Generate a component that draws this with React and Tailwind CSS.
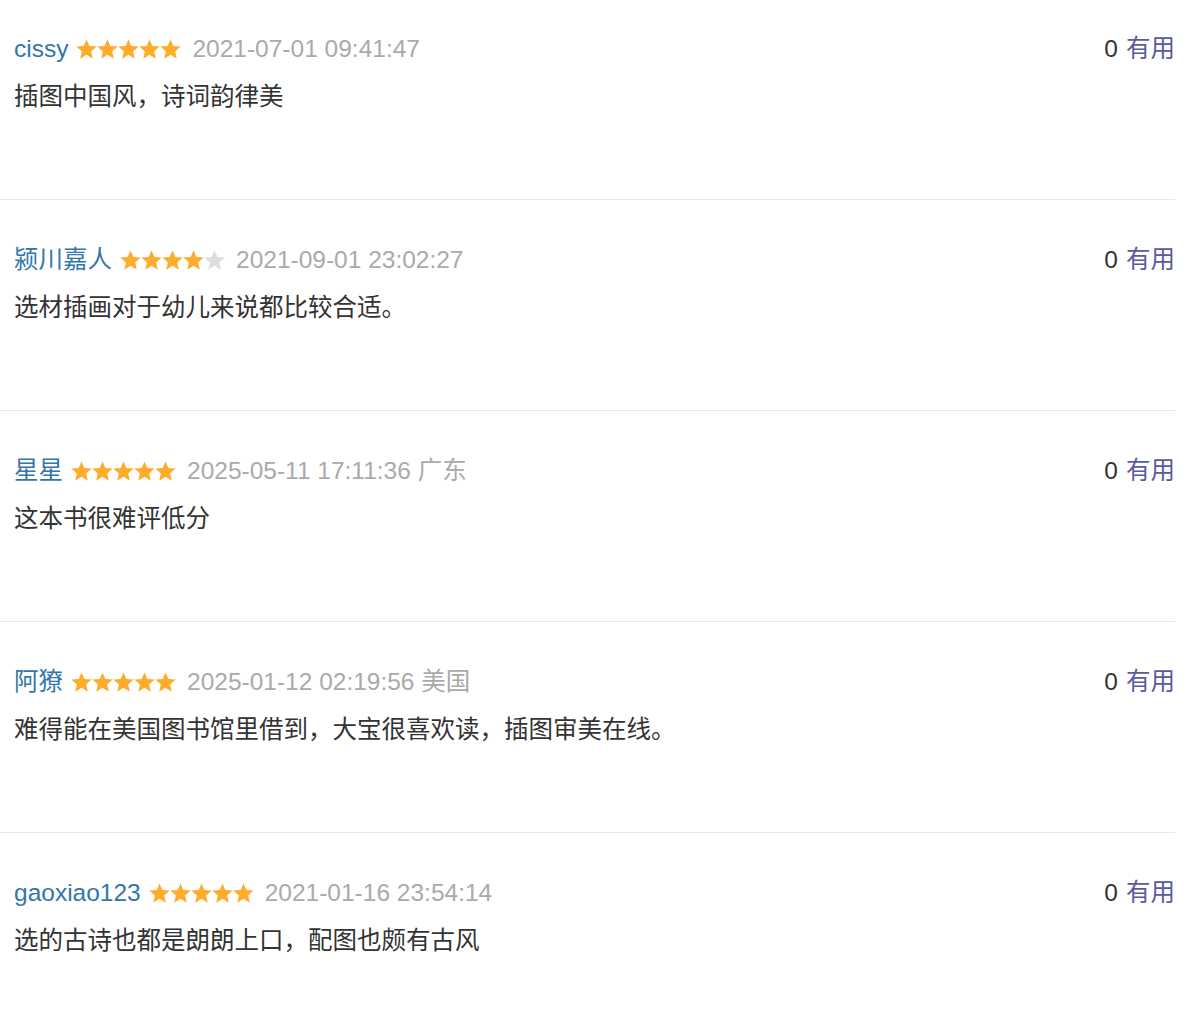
import React from 'react';

const comments = [
  { name: 'cissy', stars: 5, time: '2021-07-01 09:41:47', text: '插图中国风，诗词韵律美' },
  { name: '颍川嘉人', stars: 4, time: '2021-09-01 23:02:27', text: '选材插画对于幼儿来说都比较合适。' },
  { name: '星星', stars: 5, time: '2025-05-11 17:11:36 广东', text: '这本书很难评低分' },
  { name: '阿獠', stars: 5, time: '2025-01-12 02:19:56 美国', text: '难得能在美国图书馆里借到，大宝很喜欢读，插图审美在线。' },
  { name: 'gaoxiao123', stars: 5, time: '2021-01-16 23:54:14', text: '选的古诗也都是朗朗上口，配图也颇有古风' },
];

function Star({ on }) {
  return (
    <svg viewBox="0 0 24 24" className="w-[21px] h-[21px]">
      <polygon
        points="12,0.5 15.3,8 23.6,8.7 17.3,14.2 19.2,22.5 12,18.1 4.8,22.5 6.7,14.2 0.4,8.7 8.7,8"
        fill={on ? '#ffac2d' : '#dddddd'}
      />
    </svg>
  );
}

function Comment({ c, first, last }) {
  return (
    <div
      className={`${first ? 'pt-[34px]' : 'pt-[45px]'} ${last ? 'pb-[39px]' : 'pb-[87px] border-b border-[#e8e8e8]'}`}
    >
      <div className="flex items-center justify-between h-[30px] pl-[14px]">
        <div className="flex items-center">
          <span className="text-[#3377aa]">{c.name}</span>
          <span className="flex items-center ml-[8px]">
            {[0, 1, 2, 3, 4].map((i) => (
              <Star key={i} on={i < c.stars} />
            ))}
          </span>
          <span className="ml-[11px] text-[#aaaaaa]">{c.time}</span>
        </div>
        <div className="flex items-center">
          <span className="text-[#333333]">0</span>
          <span className="ml-[8px] text-[#5a5aa0]">有用</span>
        </div>
      </div>
      <div className="mt-[18px] h-[30px] leading-[30px] pl-[14px] text-[#333333]">{c.text}</div>
    </div>
  );
}

export default function App() {
  return (
    <div
      className="bg-white min-h-[1016px] text-[24.5px]"
      style={{ fontFamily: '"Liberation Sans", "Noto Sans CJK SC", sans-serif' }}
    >
      <div className="w-[1175px]">
        {comments.map((c, i) => (
          <Comment key={i} c={c} first={i === 0} last={i === comments.length - 1} />
        ))}
      </div>
    </div>
  );
}
